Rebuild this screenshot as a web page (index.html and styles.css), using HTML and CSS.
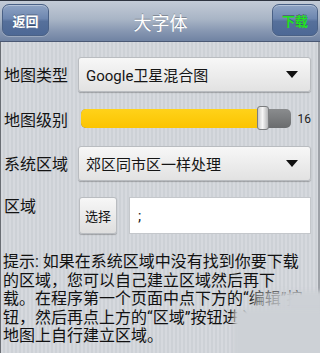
FILE: index.html
```html
<!DOCTYPE html>
<html>
<head>
<meta charset="utf-8">
<link rel="stylesheet" href="styles.css">
</head>
<body>
<div class="screen">
  <div class="header">
    <div class="hbtn back">返回</div>
    <div class="title">大字体</div>
    <div class="hbtn dl">下载</div>
  </div>
  <div class="content">
    <div class="row r1">
      <div class="label">地图类型</div>
      <div class="select"><span class="stext">Google卫星混合图</span><span class="arrow"></span></div>
    </div>
    <div class="row r2">
      <div class="label">地图级别</div>
      <div class="slider">
        <div class="track"><div class="fill" style="width:85%"></div></div>
        <div class="thumb"></div>
      </div>
      <div class="val">16</div>
    </div>
    <div class="row r3">
      <div class="label">系统区域</div>
      <div class="select"><span class="stext">郊区同市区一样处理</span><span class="arrow"></span></div>
    </div>
    <div class="row r4">
      <div class="label top">区域</div>
      <div class="pick">选择</div>
      <div class="input">;</div>
    </div>
    <div class="hint">
      <div class="line">提示: 如果在系统区域中没有找到你要下载</div>
      <div class="line">的区域，您可以自己建立区域然后再下</div>
      <div class="line">载。在程序第一个页面中点下方的“编辑”按</div>
      <div class="line">钮，然后再点上方的“区域”按钮进入</div>
      <div class="line">地图上自行建立区域。</div>
    </div>
    <div class="smudge s1"></div>
    <div class="smudge s2"></div>
  </div>
</div>
</body>
</html>
```

FILE: styles.css
```css
html, body {
  margin: 0;
  padding: 0;
}
body {
  width: 320px;
  height: 353px;
  overflow: hidden;
  font-family: "Roboto", "Noto Sans CJK SC", sans-serif;
}
.screen {
  width: 320px;
  height: 353px;
  display: flex;
  flex-direction: column;
  overflow: hidden;
}
.header {
  border-top: 1px solid #2e3440;
  border-bottom: 1px solid #4a5874;
  background: linear-gradient(#c3cbd7 0%, #a9b5c6 45%, #8797b2 75%, #7083a3 100%);
  display: flex;
  align-items: flex-start;
  padding: 3px 2px 0 2px;
  box-sizing: border-box;
  height: 42px;
  flex: none;
}
.hbtn {
  width: 47px;
  height: 32px;
  box-sizing: border-box;
  border: 1px solid #4a6186;
  border-radius: 7px;
  background: linear-gradient(#8ea3c4 0%, #6e87b0 45%, #56709b 55%, #4d6895 100%);
  box-shadow: inset 0 1px 0 rgba(255,255,255,0.35), 0 1px 0 rgba(255,255,255,0.25);
  display: flex;
  align-items: center;
  justify-content: center;
  font-family: "Noto Sans CJK SC", sans-serif;
  font-weight: bold;
  font-size: 13px;
  color: #ffffff;
  text-shadow: 0 -1px 0 rgba(0,0,0,0.3);
}
.dl {
  width: 46px;
  color: #22e022;
}
.title {
  flex: 1;
  text-align: center;
  font-family: "Noto Sans CJK SC", sans-serif;
  font-size: 18px;
  line-height: 36px;
  color: #ffffff;
  text-shadow: 0 -1px 0 rgba(0,0,0,0.25);
}
.content {
  flex: 1;
  position: relative;
  border-left: 1px solid #6a6e74;
  border-right: 2px solid #9ea2a8;
  background: repeating-linear-gradient(90deg, #d6d9de 0px, #d6d9de 2px, #cdd1d6 2px, #cdd1d6 4px);
  padding: 14px 7px 0 2px;
  display: flex;
  flex-direction: column;
}
.row {
  display: flex;
  align-items: center;
  flex: none;
}
.label {
  width: 74px;
  flex: none;
  font-family: "Noto Sans CJK SC", sans-serif;
  font-size: 16px;
  color: #141414;
  padding-left: 1px;
}
.r1, .r3 {
  height: 36px;
}
.r2 {
  height: 53px;
}
.r4 {
  height: 37px;
  margin-top: 16px;
  align-items: stretch;
}
.label.top {
  margin-top: -4px;
}
.select {
  flex: 1;
  height: 35px;
  box-sizing: border-box;
  border: 1px solid #b9bcc0;
  border-radius: 3px;
  background: linear-gradient(#f7f7f7, #e2e2e2);
  box-shadow: 0 1px 1px rgba(0,0,0,0.25);
  display: flex;
  align-items: center;
  padding: 0 12px 0 7px;
}
.stext {
  flex: 1;
  font-size: 15px;
  color: #151515;
}
.arrow {
  width: 0;
  height: 0;
  border-left: 6px solid transparent;
  border-right: 6px solid transparent;
  border-top: 7px solid #111;
}
.slider {
  position: relative;
  width: 212px;
  margin-left: 3px;
  height: 26px;
  display: flex;
  align-items: center;
}
.track {
  width: 100%;
  height: 19px;
  border-radius: 5px;
  background: linear-gradient(#8a8c8e, #6a6c6e);
  overflow: hidden;
}
.fill {
  height: 100%;
  background: linear-gradient(#ffd21a, #fbc400);
}
.thumb {
  position: absolute;
  left: 176px;
  top: 0;
  width: 12px;
  height: 24px;
  box-sizing: border-box;
  border: 1px solid #7c7e80;
  border-radius: 3px;
  background: linear-gradient(90deg, #c8c9ca, #f6f6f6 45%, #b5b6b8);
}
.val {
  margin-left: 7px;
  font-size: 12px;
  color: #222;
}
.pick {
  width: 38px;
  margin-left: 1px;
  box-sizing: border-box;
  border: 1px solid #b9bcc0;
  border-radius: 3px;
  background: linear-gradient(#f7f7f7, #dedede);
  box-shadow: 0 1px 1px rgba(0,0,0,0.25);
  display: flex;
  align-items: center;
  justify-content: center;
  font-family: "Noto Sans CJK SC", sans-serif;
  font-size: 13px;
  color: #151515;
}
.input {
  flex: 1;
  margin-left: 12px;
  background: #ffffff;
  border: 1px solid #c4c7cb;
  box-sizing: border-box;
  display: flex;
  align-items: center;
  padding-left: 8px;
  font-size: 15px;
  color: #111;
}
.hint {
  margin-top: 19px;
  font-family: "Roboto", "Noto Sans CJK SC", sans-serif;
  font-size: 16px;
  line-height: 18.5px;
  color: #111;
  flex: none;
}
.line {
  white-space: nowrap;
  height: 18.5px;
}
.smudge {
  position: absolute;
  filter: blur(2px);
}
.s1 {
  left: 252px;
  top: 249px;
  right: -6px;
  bottom: -6px;
  background: linear-gradient(90deg, rgba(205,209,214,0.45) 0px, rgba(205,209,214,0.75) 20px, #cdd1d6 38px);
}
.s2 {
  left: 233px;
  top: 267px;
  right: -6px;
  bottom: -6px;
  background: #cdd1d6;
}
```
